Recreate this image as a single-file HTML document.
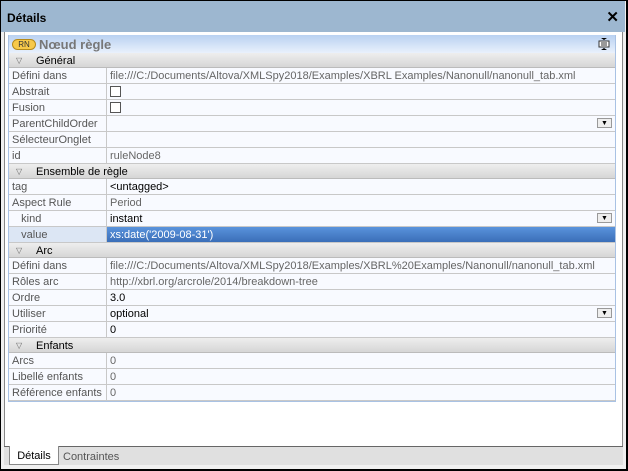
<!DOCTYPE html>
<html><head><meta charset="utf-8"><style>
*{margin:0;padding:0;box-sizing:border-box}
body{width:628px;height:471px;overflow:hidden;background:#fff;font-family:"Liberation Sans",sans-serif;font-size:11px;position:relative}
.outer{position:absolute;left:0;top:0;width:628px;height:471px;border:1px solid #000;border-right:2px solid #000;border-bottom:2px solid #000;background:#f0f0f0}
.title{position:absolute;left:1px;top:1px;width:624px;height:31px;background:#9db7d0;font-weight:bold;font-size:12px;line-height:34px;padding-left:6px;color:#000}
.x{position:absolute;right:6px;top:0;font-size:15px;font-weight:bold}
.panel{position:absolute;left:4px;top:32px;width:619px;height:414px;background:#fff;border-left:1px solid #888;border-right:1px solid #888}
.grid{position:absolute;left:8px;top:35px;width:608px;border:1px solid #a9c2e4;border-top:none}
.hdr{height:18px;background:linear-gradient(#b9d1f1,#e9f1fc);position:relative;font-weight:bold;font-size:13px;color:#777;line-height:19px;padding-left:30px}
.rn{position:absolute;left:3px;top:4px;width:24px;height:11px;border:1px solid #b58a1a;border-radius:6px;background:#f7c94a;font-size:8px;line-height:9px;text-align:center;color:#333;font-weight:normal}
.grp{height:15px;background:linear-gradient(#eeeeee,#d6d6d6);border-bottom:1px solid #bbb;line-height:16px;padding-left:27px;position:relative;color:#000;font-size:11px}
.grp:before{content:"▽";position:absolute;left:7px;top:0;font-size:8px;color:#666}
.row{height:16px;border-bottom:1px solid #c8c8c8;display:flex;background:#f8faff;line-height:17px}
.k{width:98px;border-right:1px solid #c8c8c8;padding-left:3px;color:#555;white-space:nowrap;overflow:hidden;background:#f8faff}
.v{flex:1;padding-left:3px;color:#666;white-space:nowrap;position:relative}
.d{color:#000}
.sel .k{background:#dce6f4}
.sel .v{background:linear-gradient(#5a93dc,#3a6eb8);color:#fff}
.cb{display:inline-block;width:11px;height:11px;border:1px solid #555;background:#fff;margin-top:2px;vertical-align:top}
.dd{position:absolute;right:3px;top:2px;width:15px;height:10px;border:1px solid #999;background:#eee;font-size:7px;line-height:9px;text-align:center;color:#000}
.tabbar{position:absolute;left:4px;top:446px;width:619px;height:19px;background:#e0e0e0;border-top:1px solid #666}
.tab1{position:absolute;left:5px;top:-1px;width:50px;height:19px;background:#fff;border:1px solid #888;border-top:none;font-size:11px;line-height:20px;text-align:center}
.tab2{position:absolute;left:59px;top:0;font-size:11px;line-height:20px;color:#555}
.ic{position:absolute;right:5px;top:3px;width:12px;height:12px}
</style></head><body>
<div class="outer"></div>
<div class="title">Détails<span class="x">✕</span></div>
<div class="panel"></div>
<div class="grid">
<div class="hdr"><span class="rn">RN</span>Nœud règle
<svg class="ic" viewBox="0 0 12 12"><rect x="1" y="3" width="10" height="6" fill="#fff" stroke="#333"/><line x1="3" y1="5" x2="9" y2="5" stroke="#333"/><line x1="3" y1="7" x2="9" y2="7" stroke="#333"/><path d="M3 0h6L6 2z M3 12h6L6 10z" fill="#000"/></svg></div>
<div class="grp">Général</div>
<div class="row"><div class="k">Défini dans</div><div class="v">file:///C:/Documents/Altova/XMLSpy2018/Examples/XBRL Examples/Nanonull/nanonull_tab.xml</div></div>
<div class="row"><div class="k">Abstrait</div><div class="v"><span class="cb"></span></div></div>
<div class="row"><div class="k">Fusion</div><div class="v"><span class="cb"></span></div></div>
<div class="row"><div class="k">ParentChildOrder</div><div class="v"><span class="dd">▼</span></div></div>
<div class="row"><div class="k">SélecteurOnglet</div><div class="v"></div></div>
<div class="row"><div class="k">id</div><div class="v">ruleNode8</div></div>
<div class="grp">Ensemble de règle</div>
<div class="row"><div class="k">tag</div><div class="v d">&lt;untagged&gt;</div></div>
<div class="row"><div class="k">Aspect Rule</div><div class="v">Period</div></div>
<div class="row"><div class="k">&nbsp;&nbsp;&nbsp;kind</div><div class="v d">instant<span class="dd">▼</span></div></div>
<div class="row sel"><div class="k">&nbsp;&nbsp;&nbsp;value</div><div class="v">xs:date('2009-08-31')</div></div>
<div class="grp">Arc</div>
<div class="row"><div class="k">Défini dans</div><div class="v">file:///C:/Documents/Altova/XMLSpy2018/Examples/XBRL%20Examples/Nanonull/nanonull_tab.xml</div></div>
<div class="row"><div class="k">Rôles arc</div><div class="v">http://xbrl.org/arcrole/2014/breakdown-tree</div></div>
<div class="row"><div class="k">Ordre</div><div class="v d">3.0</div></div>
<div class="row"><div class="k">Utiliser</div><div class="v d">optional<span class="dd">▼</span></div></div>
<div class="row"><div class="k">Priorité</div><div class="v d">0</div></div>
<div class="grp">Enfants</div>
<div class="row"><div class="k">Arcs</div><div class="v">0</div></div>
<div class="row"><div class="k">Libellé enfants</div><div class="v">0</div></div>
<div class="row"><div class="k">Référence enfants</div><div class="v">0</div></div>
</div>
<div class="tabbar"><div class="tab1">Détails</div><div class="tab2">Contraintes</div></div>
</body></html>
